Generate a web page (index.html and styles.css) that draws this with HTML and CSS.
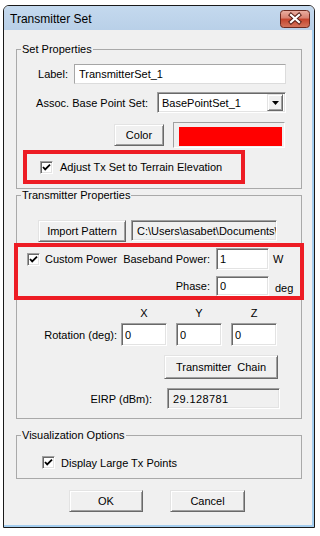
FILE: index.html
```html
<!DOCTYPE html>
<html lang="en">
<head>
	<meta charset="UTF-8">
	<meta name="viewport" content="width=device-width, initial-scale=1.0">
	<title>Transmitter Set</title>

	<link rel="stylesheet" href="styles.css">
</head>
<body>
	<div class="window">
		<div class="titlebar">
			<span class="title">Transmitter Set</span>
			<span class="close">
				<svg width="30" height="18" viewBox="0 0 30 18">
					<defs>
						<linearGradient id="closeGrad" x1="0" y1="0" x2="0" y2="1">
							<stop offset="0" stop-color="#eab0a3"/>
							<stop offset="0.45" stop-color="#d8806f"/>
							<stop offset="0.5" stop-color="#c4432c"/>
							<stop offset="1" stop-color="#d4775f"/>
						</linearGradient>
					</defs>
					<rect x="0.5" y="0.5" width="29" height="17" rx="3" fill="url(#closeGrad)" stroke="#6b2a20"/>
					<path d="M11 5 L19 12 M19 5 L11 12" stroke="#5a2219" stroke-width="4.2" stroke-linecap="square"/>
					<path d="M11 5 L19 12 M19 5 L11 12" stroke="#fff" stroke-width="2.2" stroke-linecap="square"/>
				</svg>
			</span>
		</div>

		<div class="client">
			<fieldset class="group">
				<legend>Set Properties</legend>

				<div class="row row-label">
					<span class="cap" style="width: 51px">Label:</span>
					<input class="edit edit-flat edit-label" value="TransmitterSet_1">
				</div>

				<div class="row row-base">
					<span class="cap" style="width: 131px">Assoc. Base Point Set:</span>
					<div class="combo">
						<span class="combo-text">BasePointSet_1</span>
						<span class="combo-btn">
							<svg width="7" height="4" viewBox="0 0 7 4"><path d="M0 0 H7 L3.5 4 Z" fill="#000"/></svg>
						</span>
					</div>
				</div>

				<div class="row row-color">
					<button type="button" class="btn btn-color">Color</button>
					<div class="swatch"><div class="swatch-fill"></div></div>
				</div>

				<div class="mark mark-terrain">
					<span class="check"><svg width="9" height="9" viewBox="0 0 9 9"><path d="M1 4 L3.2 6.4 L8 1.6" fill="none" stroke="#000" stroke-width="1.8"/></svg></span>
					<span class="check-text">Adjust Tx Set to Terrain Elevation</span>
				</div>
			</fieldset>

			<fieldset class="group group-tx">
				<legend>Transmitter Properties</legend>

				<div class="row row-import">
					<button type="button" class="btn btn-import">Import Pattern</button>
					<div class="readonly path">C:\Users\asabet\Documents\</div>
				</div>

				<div class="mark mark-power">
					<div class="row row-power">
						<span class="check"><svg width="9" height="9" viewBox="0 0 9 9"><path d="M1 4 L3.2 6.4 L8 1.6" fill="none" stroke="#000" stroke-width="1.8"/></svg></span>
						<span class="check-text" style="width: 75px">Custom Power</span>
						<span class="cap" style="width: 90px">Baseband Power:</span>
						<input class="edit edit-power" value="1">
						<span class="unit">W</span>
					</div>
					<div class="row row-phase">
						<span class="cap" style="width: 192px">Phase:</span>
						<input class="edit edit-phase" value="0">
						<span class="unit unit-deg">deg</span>
					</div>
				</div>

				<div class="row row-axes">
					<span class="axis">X</span>
					<span class="axis">Y</span>
					<span class="axis">Z</span>
				</div>

				<div class="row row-rotation">
					<span class="cap" style="width: 100px">Rotation (deg):</span>
					<input class="edit edit-rot" value="0">
					<input class="edit edit-rot" value="0">
					<input class="edit edit-rot" value="0">
				</div>

				<div class="row row-chain">
					<button type="button" class="btn btn-chain">Transmitter&nbsp; Chain</button>
				</div>

				<div class="row row-eirp">
					<span class="cap" style="width: 135px">EIRP (dBm):</span>
					<div class="readonly eirp">29.128781</div>
				</div>
			</fieldset>

			<fieldset class="group group-vis">
				<legend>Visualization Options</legend>

				<div class="row row-large">
					<span class="check"><svg width="9" height="9" viewBox="0 0 9 9"><path d="M1 4 L3.2 6.4 L8 1.6" fill="none" stroke="#000" stroke-width="1.8"/></svg></span>
					<span class="check-text">Display Large Tx Points</span>
				</div>
			</fieldset>

			<div class="row row-buttons">
				<button type="button" class="btn btn-ok">OK</button>
				<button type="button" class="btn btn-cancel">Cancel</button>
			</div>
		</div>
	</div>
</body>
</html>
```

FILE: styles.css
```css
body {
	margin: 0;
	background: #fff;
	font-family: "Liberation Sans", Arial, sans-serif;
	font-size: 11px;
	color: #000;
}

.window {
	margin: 5px 0 0 3px;
	width: 312px;
	height: 523px;
	box-sizing: border-box;
	border: 1px solid #1a1a1a;
	border-radius: 6px 6px 0 0;
	display: flex;
	flex-direction: column;
	overflow: hidden;
}

.titlebar {
	height: 24px;
	flex: none;
	display: flex;
	align-items: flex-start;
	padding-left: 6px;
	background: linear-gradient(#c4d9ee, #b9d0e8);
}
.titlebar .title {
	margin-top: 6px;
	font-size: 12px;
	line-height: 14px;
}
.titlebar .close {
	margin: 4px 4px 0 auto;
	height: 18px;
	display: flex;
}

.client {
	flex: 1;
	background: #f0f0f0;
	border-right: 2px solid #a3cdef;
	border-bottom: 2px solid #a3cdef;
	padding-top: 13px;
}

.group {
	margin: 0 0 0 12px;
	padding: 0;
	width: 286px;
	min-width: 0;
	box-sizing: border-box;
	border: 1px solid #a9a9a9;
}
.group legend {
	margin-left: 4px;
	padding: 0 1px;
	height: 13px;
	line-height: 13px;
}
.group-tx {
	padding-bottom: 9px;
}
.group-vis {
	margin-top: 10px;
	padding-bottom: 9px;
}

.row {
	display: flex;
	align-items: center;
}
.cap {
	flex: none;
	text-align: right;
	white-space: nowrap;
}

.edit {
	box-sizing: border-box;
	margin: 0;
	padding: 0 0 0 3px;
	font: inherit;
	color: #000;
	background: #fff;
	border: 1px solid;
	border-color: #a0a0a0 #fff #fff #a0a0a0;
	box-shadow: inset 1px 1px #696969, inset -1px -1px #e3e3e3;
	outline: none;
}
.edit-flat {
	border-color: #a6a6a6 #dcdcdc #dcdcdc #a6a6a6;
	box-shadow: none;
	padding-left: 4px;
}

.btn {
	box-sizing: border-box;
	margin: 0;
	padding: 0;
	font: inherit;
	color: #000;
	background: #f0f0f0;
	border: 1px solid;
	border-color: #e3e3e3 #696969 #696969 #e3e3e3;
	box-shadow: inset 1px 1px #fff, inset -1px -1px #a0a0a0;
}

.readonly {
	box-sizing: border-box;
	display: flex;
	align-items: center;
	padding-left: 5px;
	overflow: hidden;
	white-space: nowrap;
	background: #f0f0f0;
	border: 1px solid;
	border-color: #a0a0a0 #fff #fff #a0a0a0;
	box-shadow: inset 1px 1px #696969, inset -1px -1px #e3e3e3;
}

.check {
	flex: none;
	box-sizing: border-box;
	width: 13px;
	height: 13px;
	display: flex;
	align-items: center;
	justify-content: center;
	background: #fff;
	border: 1px solid;
	border-color: #a0a0a0 #fff #fff #a0a0a0;
	box-shadow: inset 1px 1px #696969, inset -1px -1px #e3e3e3;
}
.check-text {
	flex: none;
	margin-left: 7px;
	white-space: nowrap;
}

.mark {
	box-sizing: border-box;
	border: 4px solid #ed1c24;
}

/* set properties */
.row-label {
	margin-top: 8px;
	height: 20px;
}
.edit-label {
	margin-left: 6px;
	width: 212px;
	height: 20px;
}
.row-base {
	margin-top: 8px;
	height: 21px;
}
.combo {
	margin-left: 9px;
	width: 129px;
	height: 21px;
	box-sizing: border-box;
	display: flex;
	align-items: center;
	background: #fff;
	border: 1px solid;
	border-color: #a0a0a0 #fff #fff #a0a0a0;
	box-shadow: inset 1px 1px #696969, inset -1px -1px #e3e3e3;
	padding: 2px;
}
.combo-text {
	flex: 1;
	padding-left: 2px;
}
.combo-btn {
	box-sizing: border-box;
	width: 16px;
	height: 17px;
	display: flex;
	align-items: center;
	justify-content: center;
	background: #f0f0f0;
	border: 1px solid;
	border-color: #e3e3e3 #696969 #696969 #e3e3e3;
	box-shadow: inset 1px 1px #fff, inset -1px -1px #a0a0a0;
}
.row-color {
	margin-top: 9px;
	height: 26px;
	padding-left: 97px;
	align-items: flex-start;
}
.btn-color {
	margin-top: 2px;
	width: 50px;
	height: 22px;
}
.swatch {
	margin-left: 9px;
	width: 112px;
	height: 26px;
	box-sizing: border-box;
	padding: 4px 2px 1px 5px;
	border: 1px solid;
	border-color: #a0a0a0 #fff #fff #a0a0a0;
}
.swatch-fill {
	height: 100%;
	background: #f00;
}
.mark-terrain {
	margin: 2px 0 4px 6px;
	width: 222px;
	height: 34px;
	display: flex;
	align-items: center;
	padding-left: 13px;
}

/* transmitter properties */
.row-import {
	margin-top: 18px;
	height: 22px;
	padding-left: 21px;
	align-items: flex-start;
}
.btn-import {
	width: 88px;
	height: 22px;
}
.path {
	margin-left: 5px;
	width: 146px;
	height: 21px;
}
.mark-power {
	margin: 1px 0 0 -3px;
	width: 290px;
	height: 57px;
	padding-top: 1px;
}
.row-power {
	height: 22px;
	padding-left: 9px;
}
.row-power .check-text {
	margin-left: 5px;
}
.edit-power,
.edit-phase {
	margin-left: 6px;
	width: 53px;
}
.edit-power {
	height: 22px;
}
.row-phase {
	margin-top: 6px;
	height: 20px;
}
.edit-phase {
	height: 20px;
}
.unit {
	margin-left: 4px;
}
.unit-deg {
	margin-left: 6px;
	margin-top: 4px;
}
.row-axes {
	margin-top: 6px;
	height: 14px;
	padding-left: 104px;
	gap: 9px;
}
.axis {
	width: 46px;
	text-align: center;
}
.row-rotation {
	margin-top: 3px;
	height: 23px;
}
.edit-rot {
	margin-left: 9px;
	width: 46px;
	height: 23px;
}
.row-rotation .cap + .edit-rot {
	margin-left: 4px;
}
.row-chain {
	margin-top: 9px;
	height: 24px;
	padding-left: 147px;
}
.btn-chain {
	width: 114px;
	height: 24px;
}
.row-eirp {
	margin-top: 9px;
	height: 21px;
}
.eirp {
	margin-left: 15px;
	width: 113px;
	height: 21px;
	letter-spacing: 0.4px;
}

/* visualization */
.row-large {
	margin-top: 14px;
	height: 13px;
	padding-left: 25px;
}
.row-large .check-text {
	margin-left: 6px;
}

.row-buttons {
	margin-top: 11px;
	height: 22px;
	padding-left: 65px;
}
.btn-ok {
	width: 74px;
	height: 22px;
}
.btn-cancel {
	margin-left: 27px;
	width: 75px;
	height: 22px;
}
```
